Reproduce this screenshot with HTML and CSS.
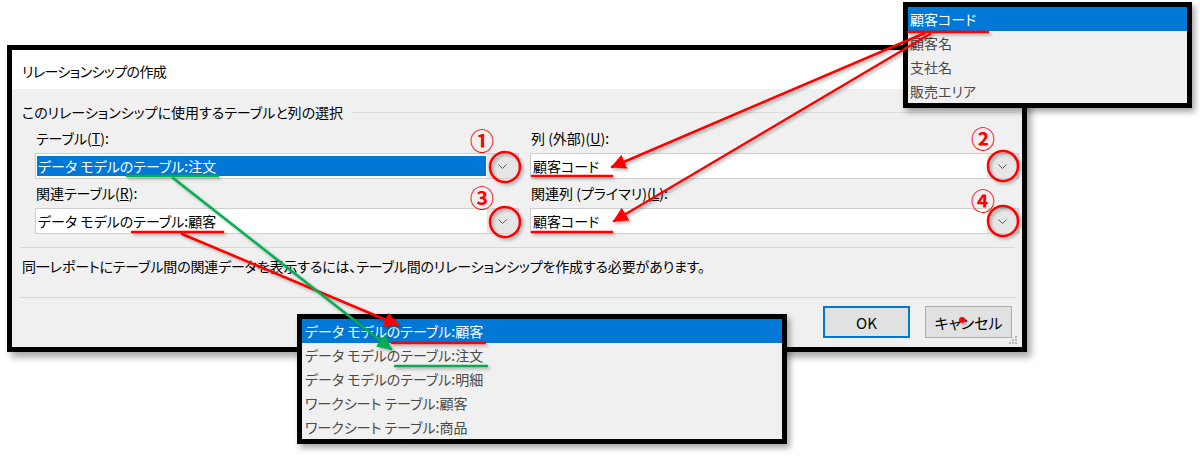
FILE: index.html
```html
<!DOCTYPE html>
<html lang="ja">
<head>
<meta charset="utf-8">
<title>リレーションシップの作成</title>
<link rel="stylesheet" href="styles.css">
</head>
<body>
<div class="page">
  <div class="dialog">
    <div class="title">リレーションシップの作成</div>
    <div class="body">
      <div class="group-head"><span class="group-label">このリレーションシップに使用するテーブルと列の選択</span><span class="rule"></span></div>
      <div class="fields">
        <div class="field">
          <div class="label">テーブル(<u>T</u>):</div>
          <div class="combo focused">
            <div class="value"><span class="sel">データ モデルのテーブル:注文</span></div>
            <div class="drop"><svg width="9" height="5" viewBox="0 0 9 5"><path d="M0.5 0.5 L4.5 4.5 L8.5 0.5" fill="none" stroke="#5a5a5a" stroke-width="1"/></svg></div>
          </div>
        </div>
        <div class="field">
          <div class="label">列 (外部)(<u>U</u>):</div>
          <div class="combo">
            <div class="value"><span class="txt">顧客コード</span></div>
            <div class="drop"><svg width="9" height="5" viewBox="0 0 9 5"><path d="M0.5 0.5 L4.5 4.5 L8.5 0.5" fill="none" stroke="#5a5a5a" stroke-width="1"/></svg></div>
          </div>
        </div>
        <div class="field">
          <div class="label">関連テーブル(<u>R</u>):</div>
          <div class="combo">
            <div class="value"><span class="txt">データ モデルのテーブル:顧客</span></div>
            <div class="drop"><svg width="9" height="5" viewBox="0 0 9 5"><path d="M0.5 0.5 L4.5 4.5 L8.5 0.5" fill="none" stroke="#5a5a5a" stroke-width="1"/></svg></div>
          </div>
        </div>
        <div class="field">
          <div class="label">関連列 (プライマリ)(<u>L</u>):</div>
          <div class="combo">
            <div class="value"><span class="txt">顧客コード</span></div>
            <div class="drop"><svg width="9" height="5" viewBox="0 0 9 5"><path d="M0.5 0.5 L4.5 4.5 L8.5 0.5" fill="none" stroke="#5a5a5a" stroke-width="1"/></svg></div>
          </div>
        </div>
      </div>
      <div class="sep sep-top"></div>
      <p class="note">同一レポートにテーブル間の関連データを表示するには、テーブル間のリレーションシップを作成する必要があります。</p>
      <div class="sep sep-bottom"></div>
      <div class="buttons">
        <button class="btn btn-default">OK</button>
        <button class="btn">キャンセル</button>
      </div>
    </div>
    <svg class="grip" width="9" height="9" viewBox="0 0 9 9">
      <rect x="6" y="0" width="2" height="2" fill="#b8b8b8"/>
      <rect x="3" y="3" width="2" height="2" fill="#b8b8b8"/>
      <rect x="6" y="3" width="2" height="2" fill="#b8b8b8"/>
      <rect x="0" y="6" width="2" height="2" fill="#b8b8b8"/>
      <rect x="3" y="6" width="2" height="2" fill="#b8b8b8"/>
      <rect x="6" y="6" width="2" height="2" fill="#b8b8b8"/>
    </svg>
  </div>

  <ul class="popup popup-cols">
    <li class="item active">顧客コード</li>
    <li class="item">顧客名</li>
    <li class="item">支社名</li>
    <li class="item">販売エリア</li>
  </ul>

  <ul class="popup popup-tables">
    <li class="item active">データ モデルのテーブル:顧客</li>
    <li class="item">データ モデルのテーブル:注文</li>
    <li class="item">データ モデルのテーブル:明細</li>
    <li class="item">ワークシート テーブル:顧客</li>
    <li class="item">ワークシート テーブル:商品</li>
  </ul>

  <span class="num n1">①</span>
  <span class="num n2">②</span>
  <span class="num n3">③</span>
  <span class="num n4">④</span>

  <svg class="annot" width="1200" height="456" viewBox="0 0 1200 456">
    <defs>
      <marker id="ar" viewBox="0 0 10 10" refX="9" refY="5" markerWidth="6" markerHeight="6" orient="auto" markerUnits="strokeWidth">
        <path d="M0 0 L10 5 L0 10 z" fill="#ff0000"/>
      </marker>
      <marker id="ag" viewBox="0 0 10 10" refX="9" refY="5" markerWidth="6" markerHeight="6" orient="auto" markerUnits="strokeWidth">
        <path d="M0 0 L10 5 L0 10 z" fill="#00b050"/>
      </marker>
    </defs>
    <g fill="none" stroke-width="2.5" stroke-linecap="round">
      <circle cx="505" cy="167" r="15" stroke="#ff0000"/>
      <circle cx="505" cy="222" r="15" stroke="#ff0000"/>
      <circle cx="1003" cy="166" r="15" stroke="#ff0000"/>
      <circle cx="1003" cy="221" r="15" stroke="#ff0000"/>
      <line x1="908" y1="32" x2="988" y2="32" stroke="#ff0000"/>
      <line x1="532" y1="176" x2="612" y2="176" stroke="#ff0000"/>
      <line x1="532" y1="232" x2="612" y2="232" stroke="#ff0000"/>
      <line x1="132" y1="232" x2="223" y2="232" stroke="#ff0000"/>
      <line x1="127" y1="176" x2="218" y2="176" stroke="#00b050"/>
      <line x1="392" y1="343" x2="485" y2="343" stroke="#ff0000"/>
      <line x1="395" y1="366" x2="487" y2="366" stroke="#00b050"/>
      <line x1="925" y1="33" x2="612" y2="167" stroke="#ff0000" marker-end="url(#ar)"/>
      <line x1="930" y1="34" x2="614" y2="221" stroke="#ff0000" marker-end="url(#ar)"/>
      <line x1="182" y1="234" x2="398" y2="325" stroke="#ff0000" marker-end="url(#ar)"/>
      <line x1="173" y1="178" x2="391" y2="349" stroke="#00b050" marker-end="url(#ag)"/>
    </g>
    <circle cx="962" cy="320" r="3" fill="#ff0000"/>
  </svg>
</div>
</body>
</html>
```

FILE: styles.css
```css
* { box-sizing: border-box; }

html, body {
  margin: 0;
  padding: 0;
  background: #ffffff;
}

body {
  font-family: "Noto Sans CJK JP", "Noto Sans", sans-serif;
  font-feature-settings: "palt";
  font-size: 14px;
  color: #000;
}

.page {
  position: relative;
  width: 1200px;
  height: 456px;
  overflow: hidden;
}

/* ---------- dialog ---------- */
.dialog {
  position: relative;
  margin: 45px 0 0 7px;
  width: 1020px;
  height: 307px;
  border: 5px solid #000;
  background: #f0f0f0;
  box-shadow: 4px 5px 7px rgba(0, 0, 0, 0.35);
  display: flex;
  flex-direction: column;
}

.title {
  height: 39px;
  background: #fff;
  padding: 11px 0 0 10px;
  line-height: 20px;
  font-size: 14px;
  letter-spacing: -0.6px;
}

.body {
  flex: 1;
  padding: 13px 7px 0 10px;
  display: flex;
  flex-direction: column;
}

.group-head {
  display: flex;
  align-items: center;
  height: 20px;
}

.group-label {
  line-height: 20px;
  white-space: nowrap;
}

.rule {
  flex: 1;
  height: 1px;
  background: #dcdcdc;
  margin-left: 8px;
}

.fields {
  margin: 6px 0 0 13px;
  display: grid;
  grid-template-columns: 484px 489px;
  column-gap: 11px;
  row-gap: 4px;
}

.label {
  height: 20px;
  line-height: 20px;
  margin-left: 1px;
}

.combo {
  margin-top: 5px;
  height: 26px;
  border: 1px solid #cfcfcf;
  background: #fff;
  display: flex;
}

.value {
  flex: 1;
  padding: 2px 1px;
  display: flex;
}

.value .txt,
.value .sel {
  flex: 1;
  line-height: 20px;
  padding-left: 1px;
  white-space: nowrap;
}

.combo.focused .sel {
  background: #0078d7;
  color: #fff;
}

.drop {
  width: 31px;
  display: flex;
  align-items: center;
  justify-content: center;
  background: #e6e6e6;
}

.sep {
  height: 1px;
  background: #d7d7d7;
  margin-left: -2px;
}

.sep-top { margin-top: 13px; }
.sep-bottom { margin-top: 21px; }

.note {
  margin: 8px 0 0 0;
  line-height: 20px;
  white-space: nowrap;
  letter-spacing: -0.15px;
}

.buttons {
  margin-top: 8px;
  display: flex;
  justify-content: flex-end;
  gap: 15px;
  padding-right: 3px;
}

.btn {
  width: 87px;
  height: 32px;
  background: #e1e1e1;
  border: 1px solid #adadad;
  font-family: inherit;
  font-feature-settings: "palt";
  font-size: 15px;
  color: #000;
  padding: 0;
}

.btn-default {
  border: 2px solid #0078d7;
}

.grip {
  position: absolute;
  right: 4px;
  bottom: 2px;
}

/* ---------- popups ---------- */
.popup {
  position: absolute;
  margin: 0;
  padding: 0;
  list-style: none;
  border: 5px solid #000;
  background: #f0f0f0;
  box-shadow: 3px 4px 6px rgba(0, 0, 0, 0.35);
}

.popup-cols {
  left: 903px;
  top: 2px;
  width: 289px;
}

.popup-tables {
  left: 297px;
  top: 314px;
  width: 490px;
}

.item {
  height: 24px;
  line-height: 24px;
  padding-left: 2px;
  color: #4a4a4a;
  white-space: nowrap;
}

.popup-tables .item { padding-left: 3px; }

.item.active {
  background: #0078d7;
  color: #fff;
}

/* ---------- annotations ---------- */
.num {
  position: absolute;
  transform: translate(-50%, -50%);
  color: #ff0000;
  font-size: 24px;
  font-weight: 700;
  line-height: 1;
}

.n1 { left: 482px; top: 140px; }
.n2 { left: 983px; top: 138px; }
.n3 { left: 482px; top: 197px; }
.n4 { left: 983px; top: 200px; }

.annot {
  position: absolute;
  left: 0;
  top: 0;
  pointer-events: none;
  filter: drop-shadow(2px 2px 1.5px rgba(0, 0, 0, 0.3));
}
```
